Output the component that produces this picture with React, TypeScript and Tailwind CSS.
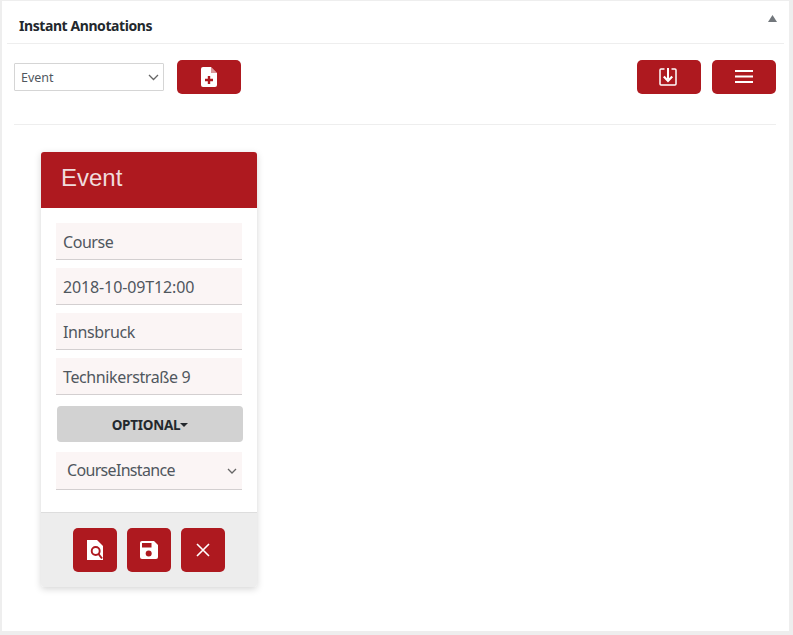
import React from "react";

const ubuntu = "font-['Noto_Sans','Open_Sans',sans-serif]";

function RedButton({ className, children }: { className: string; children: React.ReactNode }) {
  return (
    <div className={"flex items-center justify-center rounded-[5px] bg-[#ae191f] " + className}>{children}</div>
  );
}

function Field({ text, tracking }: { text: string; tracking: string }) {
  return (
    <div className={"flex h-[37px] items-center border-b border-[#d3cfd0] bg-[#fbf5f5] pl-[7px] pt-[2px] text-[16px] text-[#50575e] " + tracking}>
      {text}
    </div>
  );
}

export default function App() {
  return (
    <div className={"h-[635px] w-[793px] overflow-hidden bg-[#eeeeee] pb-[4px] pl-[2px] pr-[4px] pt-px " + ubuntu}>
      <div className="h-[630px] bg-white">
        <div className="ml-[5px] mr-[5px] flex h-[43px] items-center justify-between border-b border-[#eeeeee] pl-3 pr-[7px]">
          <span className="pt-[6px] text-[14px] font-bold tracking-[-0.42px] text-[#23282d]">Instant Annotations</span>
          <svg width="9" height="7" viewBox="0 0 9 7" className="mb-[8px]">
            <path d="M4.5 0 L9 7 L0 7 Z" fill="#72777c" />
          </svg>
        </div>

        <div className="ml-3 mr-[13px] border-b border-[#eeeeee] pb-[30px] pt-4">
          <div className="flex items-center justify-between">
            <div className="flex items-center gap-[13px]">
              <div className="flex h-[28px] w-[150px] items-center justify-between rounded-[1px] border border-[#d5d5d5] bg-white pl-[6px] pr-[4px] text-[12.5px] text-[#50575e]">
                <span className="pt-[2px]">Event</span>
                <svg width="11" height="7" viewBox="0 0 11 7" fill="none" stroke="#666" strokeWidth="1.3">
                  <path d="M1 1 L5.5 5.5 L10 1" />
                </svg>
              </div>
              <RedButton className="h-[34px] w-[64px]">
                <svg width="16" height="20" viewBox="0 0 16 20">
                  <path d="M2 0 H10 L16 6 V18 a2 2 0 0 1 -2 2 H2 a2 2 0 0 1 -2 -2 V2 a2 2 0 0 1 2 -2 Z" fill="#fff" />
                  <path d="M10 0 V6 H16" fill="#ae191f" fillOpacity="0.45" />
                  <path d="M8 9 V17 M4 13 H12" stroke="#ae191f" strokeWidth="2.4" />
                </svg>
              </RedButton>
            </div>
            <div className="flex items-center gap-[11px]">
              <RedButton className="h-[34px] w-[64px]">
                <svg width="18" height="18" viewBox="0 0 18 18" fill="none" stroke="#fff" className="mr-[2px]">
                  <path d="M5.5 1 H2 a1 1 0 0 0 -1 1 V16 a1 1 0 0 0 1 1 H16 a1 1 0 0 0 1 -1 V2 a1 1 0 0 0 -1 -1 H12.5" strokeWidth="1.5" />
                  <path d="M9 0 V11" strokeWidth="2" />
                  <path d="M4.8 8.5 L9 13 L13.2 8.5" strokeWidth="2.2" />
                </svg>
              </RedButton>
              <RedButton className="h-[34px] w-[64px]">
                <svg width="18" height="14" viewBox="0 0 18 14" fill="#fff">
                  <rect x="0" y="0" width="18" height="2" />
                  <rect x="0" y="5.5" width="18" height="2" />
                  <rect x="0" y="11" width="18" height="2" />
                </svg>
              </RedButton>
            </div>
          </div>
        </div>

        <div className="ml-[39px] mt-[27px] w-[216px] rounded-[3px] bg-white shadow-[0_2px_7px_rgba(0,0,0,0.17)]">
          <div className="flex h-[56px] items-center rounded-t-[3px] bg-[#ae191f] pb-[4px] pl-[20px] font-['Liberation_Sans',sans-serif] text-[24px] text-[#f0dcdd]">
            Event
          </div>
          <div className="flex flex-col px-[15px] pb-[22px] pt-[15px]">
            <div className="flex flex-col gap-2">
              <Field text="Course" tracking="tracking-[-0.45px]" />
              <Field text="2018-10-09T12:00" tracking="tracking-[-0.13px]" />
              <Field text="Innsbruck" tracking="tracking-[-0.4px]" />
              <Field text="Technikerstraße 9" tracking="tracking-[-0.38px]" />
            </div>
            <div className="ml-px mr-[-1px] mt-[11px] flex h-[36px] items-center justify-center rounded-[4px] bg-[#d2d2d2] pt-[3px] text-[13.5px] font-bold tracking-[-0.25px] text-[#23282d]">
              OPTIONAL
              <svg width="8" height="4" viewBox="0 0 8 4" className="mt-[-1px]">
                <path d="M0 0 H8 L4 4 Z" fill="#23282d" />
              </svg>
            </div>
            <div className="mt-[10px] flex h-[38px] items-center justify-between border-b border-[#d3cfd0] bg-[#fbf5f5] pl-[11px] pr-[5px] text-[16px] tracking-[-0.68px] text-[#50575e]">
              <span className="mb-[2px]">CourseInstance</span>
              <svg width="10" height="6" viewBox="0 0 10 6" fill="none" stroke="#666" strokeWidth="1.3">
                <path d="M1 1 L5 5 L9 1" />
              </svg>
            </div>
          </div>
          <div className="flex h-[75px] items-center gap-[10px] rounded-b-[3px] border-t border-[#dddddd] bg-[#ededed] pb-px pl-8">
            <RedButton className="size-[44px]">
              <svg width="16" height="20" viewBox="0 0 16 20">
                <path d="M0 0 H10 L16 6 V20 H0 Z" fill="#fff" />
                <circle cx="8.7" cy="11" r="4" fill="none" stroke="#ae191f" strokeWidth="1.9" />
                <path d="M11.5 14 L15 18.5" stroke="#ae191f" strokeWidth="2" />
              </svg>
            </RedButton>
            <RedButton className="size-[44px]">
              <svg width="18" height="18" viewBox="0 0 18 18">
                <path d="M2 0 H14 L18 4 V16 a2 2 0 0 1 -2 2 H2 a2 2 0 0 1 -2 -2 V2 a2 2 0 0 1 2 -2 Z" fill="#fff" />
                <rect x="2" y="2" width="9.5" height="4.5" fill="#ae191f" />
                <circle cx="8.7" cy="12.5" r="3" fill="#ae191f" />
              </svg>
            </RedButton>
            <RedButton className="size-[44px]">
              <svg width="14" height="14" viewBox="0 0 14 14" stroke="#fff" strokeWidth="1.6">
                <path d="M1 1 L13 13 M13 1 L1 13" />
              </svg>
            </RedButton>
          </div>
        </div>
      </div>
    </div>
  );
}
